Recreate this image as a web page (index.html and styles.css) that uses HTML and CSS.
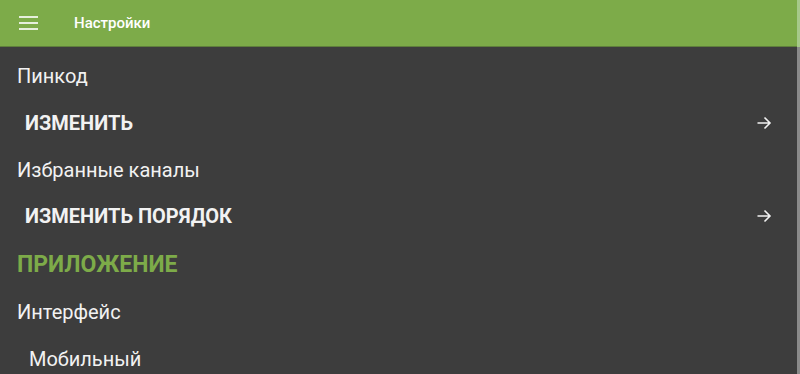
FILE: index.html
```html
<!DOCTYPE html>
<html lang="ru">
<head>
  <meta charset="UTF-8" />
  <meta name="viewport" content="width=device-width, initial-scale=1.0" />
  <title>Настройки</title>
  <link rel="stylesheet" href="styles.css">
</head>
<body>
  <div class="app">
    <div class="main">
      <header class="toolbar">
        <span class="menu-icon">
          <span></span><span></span><span></span>
        </span>
        <span class="toolbar-title">Настройки</span>
      </header>

      <div class="settings">
        <div class="row label">Пинкод</div>
        <div class="row action">
          <span>ИЗМЕНИТЬ</span>
          <svg class="arrow" width="16" height="16" viewBox="0 0 16 16">
            <path d="M1.5 8 H14 M8.5 2.5 L14 8 L8.5 13.5" fill="none" stroke="#f2f2f2" stroke-width="1.6"/>
          </svg>
        </div>
        <div class="row label">Избранные каналы</div>
        <div class="row action">
          <span>ИЗМЕНИТЬ ПОРЯДОК</span>
          <svg class="arrow" width="16" height="16" viewBox="0 0 16 16">
            <path d="M1.5 8 H14 M8.5 2.5 L14 8 L8.5 13.5" fill="none" stroke="#f2f2f2" stroke-width="1.6"/>
          </svg>
        </div>
        <div class="row section">ПРИЛОЖЕНИЕ</div>
        <div class="row label">Интерфейс</div>
        <div class="row option">Мобильный</div>
      </div>
    </div>
    <div class="scrollbar"></div>
  </div>
</body>
</html>
```

FILE: styles.css
```css
html, body {
  margin: 0;
  padding: 0;
  height: 100%;
  overflow: hidden;
}
body {
  font-family: Roboto, "Noto Sans", sans-serif;
  background-color: #3d3d3d;
  color: #f2f2f2;
}
.app {
  display: flex;
  height: 100%;
}
.main {
  flex: 1;
  min-width: 0;
}
.scrollbar {
  width: 3px;
  background: linear-gradient(#a6c98a 0, #a6c98a 47px, #8a8a8a 47px);
}
.toolbar {
  height: 46px;
  background-color: #7dab49;
  border-bottom: 1px solid #5f7f3c;
  display: flex;
  align-items: center;
  padding-left: 19px;
}
.menu-icon {
  display: flex;
  flex-direction: column;
  gap: 4px;
  width: 19px;
  margin-top: -1px;
}
.menu-icon span {
  display: block;
  height: 2px;
  background-color: #e6efdc;
}
.toolbar-title {
  margin-left: 36px;
  font-size: 15px;
  font-weight: 500;
  color: #ffffff;
}
.settings {
  padding-top: 6px;
}
.row {
  height: 46.7px;
  display: flex;
  align-items: center;
  padding-left: 17px;
  padding-right: 25px;
}
.label {
  font-size: 20px;
}
.action {
  justify-content: space-between;
  padding-left: 25px;
  font-size: 20px;
  font-weight: bold;
}
.arrow {
  flex-shrink: 0;
}
.section {
  font-size: 23px;
  font-weight: bold;
  color: #7dab49;
  height: 49px;
}
.option {
  padding-left: 29px;
  font-size: 20px;
}
```
